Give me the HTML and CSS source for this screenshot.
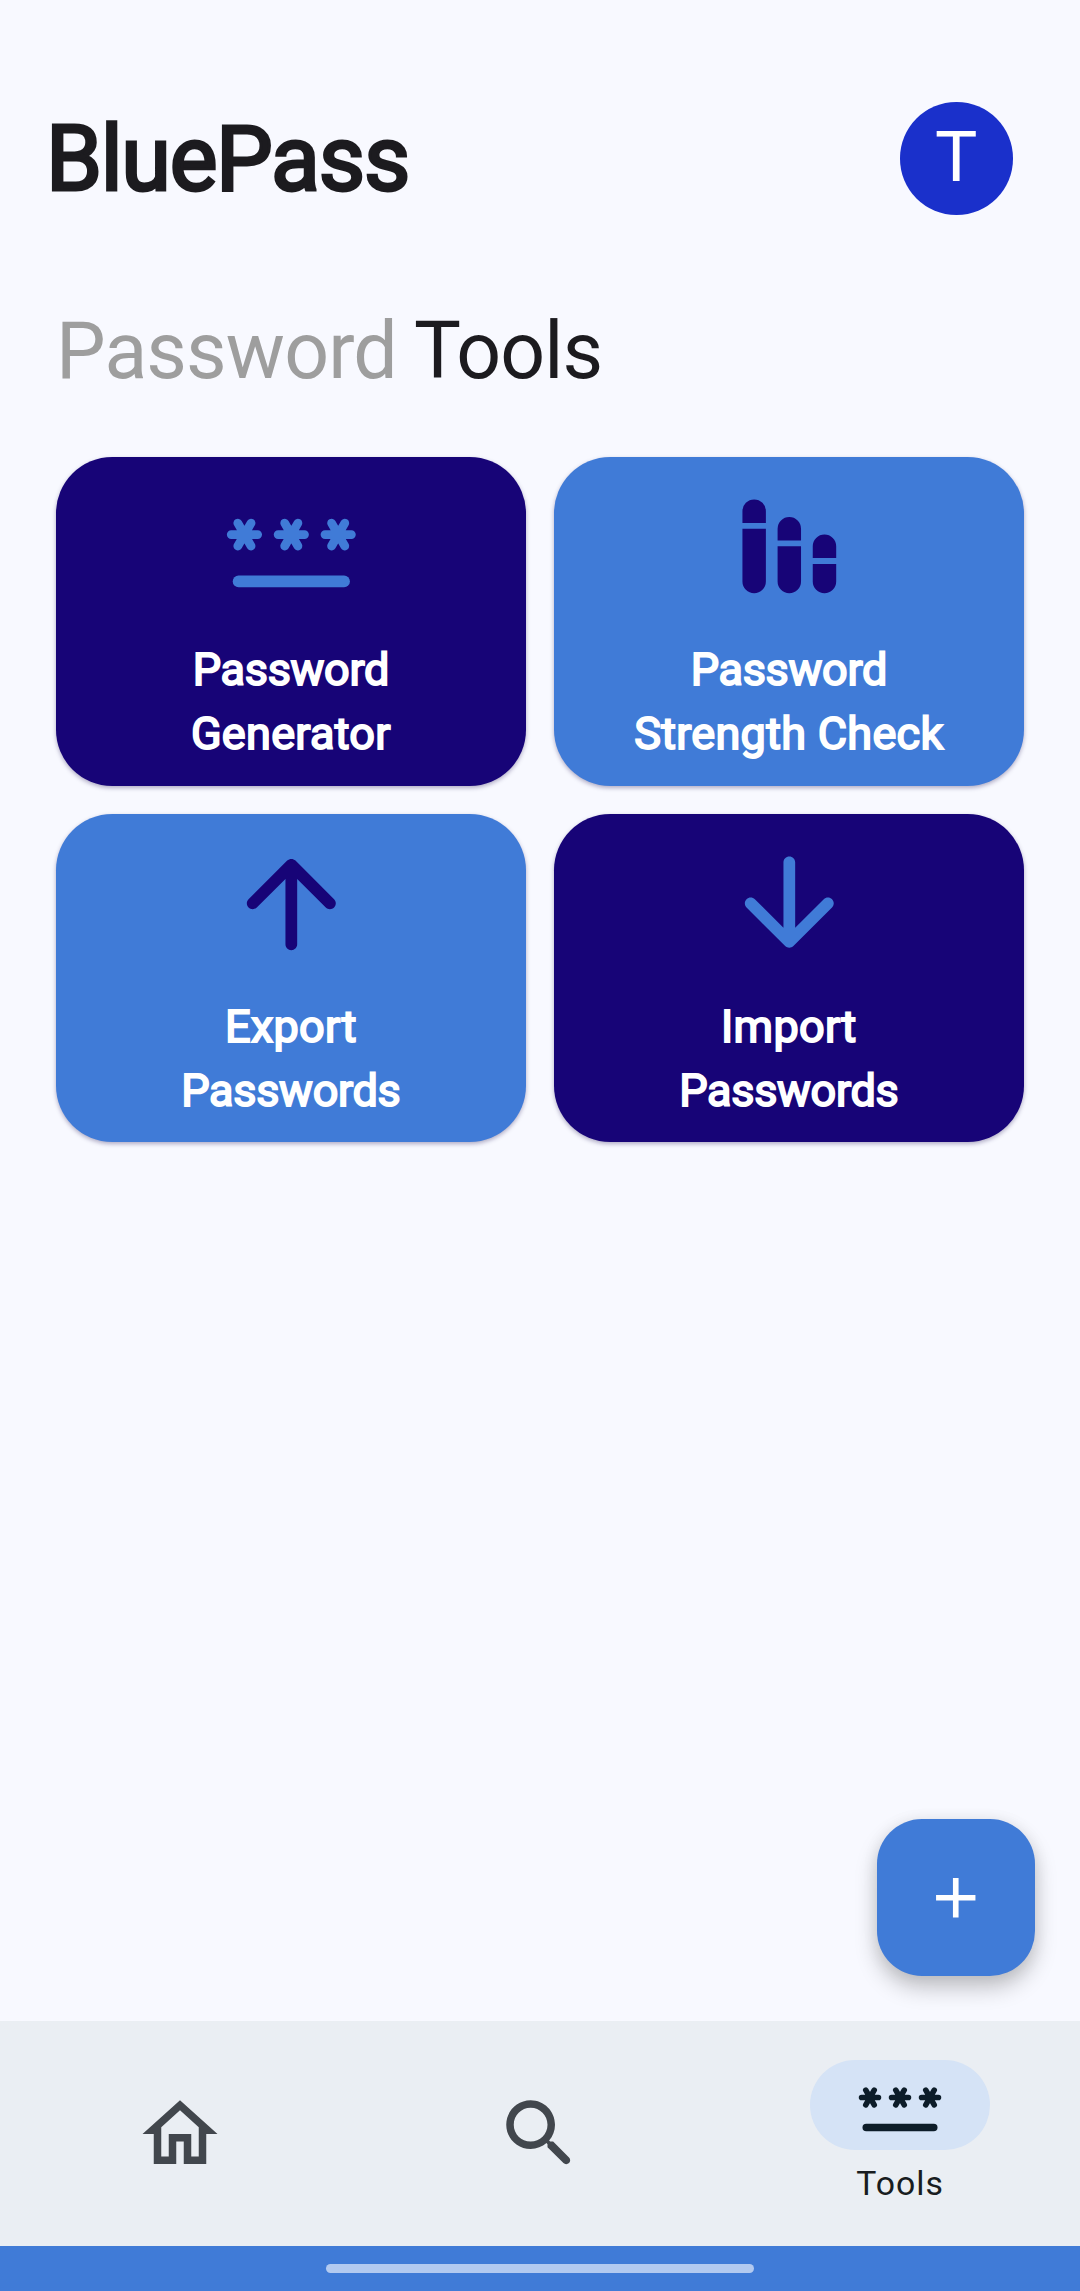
FILE: index.html
```html
<!DOCTYPE html>
<html lang="en">
<head>
<meta charset="utf-8">
<title>BluePass</title>
<link rel="stylesheet" href="styles.css">
</head>
<body>
<svg class="defs" aria-hidden="true">
  <defs>
    <g id="star" fill="none" stroke="currentColor" stroke-width="1.5" stroke-linecap="round">
      <path d="M-2.25 0h4.5M-1.125-1.95l2.25 3.9M1.125-1.95l-2.25 3.9"/>
    </g>
    <symbol id="password" viewBox="0 0 24 24" overflow="visible">
      <use href="#star" x="4" y="10"/>
      <use href="#star" x="12" y="10"/>
      <use href="#star" x="20" y="10"/>
      <rect x="2" y="17" width="20" height="2" rx="1"/>
    </symbol>
  </defs>
</svg>
<div class="screen">
  <header class="header">
    <h1 class="brand">BluePass</h1>
    <div class="avatar"><span class="initial">T</span></div>
  </header>
  <main class="main">
    <h2 class="heading"><span class="muted">Password</span> Tools</h2>
    <div class="tools">
      <button class="card dark">
        <svg class="card-icon"><use href="#password"/></svg>
        <span class="label"><span class="tight">Password</span><br><span class="loose">Generator</span></span>
      </button>
      <button class="card light">
        <svg class="card-icon" viewBox="0 0 24 24"><path d="M4 8V6a2 2 0 0 1 4 0v2zM4 9h4v9a2 2 0 0 1-4 0zM10 11V9a2 2 0 0 1 4 0v2zM10 12h4v6a2 2 0 0 1-4 0zM16 14v-2a2 2 0 0 1 4 0v2zM16 15h4v3a2 2 0 0 1-4 0z"/></svg>
        <span class="label"><span class="tight">Password</span><br><span class="loose">Strength Check</span></span>
      </button>
      <button class="card light">
        <svg class="card-icon" viewBox="0 0 24 24"><path d="M13 19V7.83l4.88 4.88c.39.39 1.03.39 1.42 0 .39-.39.39-1.02 0-1.41l-6.59-6.59c-.39-.39-1.02-.39-1.41 0l-6.6 6.58c-.39.39-.39 1.02 0 1.41.39.39 1.02.39 1.41 0L11 7.83V19c0 .55.45 1 1 1s1-.45 1-1z"/></svg>
        <span class="label"><span class="loose">Export</span><br><span class="tight">Passwords</span></span>
      </button>
      <button class="card dark">
        <svg class="card-icon" viewBox="0 0 24 24"><path d="M11 5v11.17l-4.88-4.88c-.39-.39-1.03-.39-1.42 0-.39.39-.39 1.02 0 1.41l6.59 6.59c.39.39 1.02.39 1.41 0l6.59-6.59c.39-.39.39-1.02 0-1.41-.39-.39-1.02-.39-1.41 0L13 16.17V5c0-.55-.45-1-1-1s-1 .45-1 1z"/></svg>
        <span class="label"><span class="loose">Import</span><br><span class="tight">Passwords</span></span>
      </button>
    </div>
    <button class="fab" aria-label="Add">
      <svg class="fab-icon" viewBox="0 0 24 24"><path d="M19 13h-6v6h-2v-6H5v-2h6V5h2v6h6v2z"/></svg>
    </button>
  </main>
  <nav class="nav">
    <a class="nav-item"><svg class="nav-icon" viewBox="0 0 24 24"><path d="M12 5.69l5 4.5V18h-2v-6H9v6H7v-7.81l5-4.5M12 3L2 12h3v8h6v-6h2v6h6v-8h3L12 3z"/></svg></a>
    <a class="nav-item"><svg class="nav-icon" viewBox="0 0 24 24"><path d="M15.5 14h-.79l-.28-.27C15.41 12.59 16 11.11 16 9.5 16 5.91 13.09 3 9.5 3S3 5.91 3 9.5 5.91 16 9.5 16c1.61 0 3.09-.59 4.23-1.57l.27.28v.79l4.25 4.25c.41.41 1.08.41 1.49 0 .41-.41.41-1.08 0-1.49L15.5 14zm-6 0C7.01 14 5 11.99 5 9.5S7.01 5 9.5 5 14 7.01 14 9.5 11.99 14 9.5 14z"/></svg></a>
    <a class="nav-item active">
      <span class="indicator"><svg class="nav-icon"><use href="#password"/></svg></span>
      <span class="nav-label">Tools</span>
    </a>
  </nav>
  <div class="gesture"><span class="handle"></span></div>
</div>
</body>
</html>
```

FILE: styles.css
```css
* { box-sizing: border-box; }

body {
  margin: 0;
  background: #f8f9ff;
  color: #1c1b1f;
  font-family: Roboto, "Liberation Sans", sans-serif;
}

svg { display: block; fill: currentColor; overflow: visible; }
button { border: 0; font: inherit; }
h1, h2 { margin: 0; font-weight: 400; }

.defs { position: absolute; width: 0; height: 0; }

.screen {
  display: flex;
  flex-direction: column;
  width: 1080px;
  height: 2291px;
}

.header {
  display: flex;
  justify-content: space-between;
  align-items: center;
  height: 113px;
  margin-top: 102px;
  padding: 0 67.5px 0 46px;
}

.brand {
  padding-top: 2px;
  font-size: 90px;
  line-height: 112px;
  letter-spacing: -1.3px;
  -webkit-text-stroke: 3px currentColor;
}

.avatar {
  display: flex;
  justify-content: center;
  width: 112.5px;
  height: 112.5px;
  border-radius: 50%;
  background: #1a30cb;
  color: #fff;
}

.initial { font-size: 71px; line-height: 110px; }

.main {
  display: flex;
  flex-direction: column;
  flex: 1;
  padding: 0 45.5px 45px 56px;
}

.heading {
  margin-top: 86px;
  font-size: 78.75px;
  line-height: 100px;
  letter-spacing: -.88px;
}

.muted { color: #9e9e9e; }

.tools {
  display: grid;
  grid-template-columns: 1fr 1fr;
  gap: 28.125px;
  margin: 56px 10.75px 0 0;
}

.card {
  display: flex;
  flex-direction: column;
  align-items: center;
  gap: 21px;
  height: 328.6px;
  padding: 19.3px 0 0;
  border-radius: 56.25px;
  box-shadow: 0 2px 4px rgba(40, 30, 90, .35);
}

.dark { background: #170477; color: #407bd7; }
.light { background: #407bd7; color: #170477; }

.card-icon { width: 140.625px; height: 140.625px; }

.label {
  color: #fff;
  font-size: 45px;
  line-height: 64px;
  text-align: center;
  -webkit-text-stroke: 1.9px currentColor;
}

.tight { letter-spacing: -.3px; }
.loose { letter-spacing: .3px; }

.fab {
  display: flex;
  align-items: center;
  justify-content: center;
  width: 157.5px;
  height: 157.5px;
  margin: auto 0 0 auto;
  padding: 0;
  border-radius: 45px;
  background: #407bd7;
  color: #fff;
  box-shadow: 0 12px 22px rgba(0, 0, 0, .22), 0 2px 16px rgba(0, 0, 0, .08);
}

.fab-icon { width: 67.5px; height: 67.5px; }

.nav {
  display: grid;
  grid-template-columns: repeat(3, 1fr);
  height: 225px;
  background: #eaeef3;
  color: #42474d;
}

.nav-item {
  display: flex;
  flex-direction: column;
  align-items: center;
  justify-content: center;
}

.nav-icon { width: 90px; height: 90px; }

.active { justify-content: flex-start; padding-top: 39px; color: #0d1d29; }

.indicator {
  display: flex;
  justify-content: center;
  width: 180px;
  height: 90px;
  border-radius: 45px;
  background: #d5e3f6;
}

.nav-label {
  margin-top: 11px;
  color: #181c20;
  font-size: 33.75px;
  line-height: 45px;
  letter-spacing: 1px;
}

.gesture {
  display: flex;
  justify-content: center;
  align-items: center;
  height: 45px;
  background: #407bd7;
}

.handle {
  width: 428px;
  height: 9px;
  border-radius: 5px;
  background: #b3caf0;
}
```
